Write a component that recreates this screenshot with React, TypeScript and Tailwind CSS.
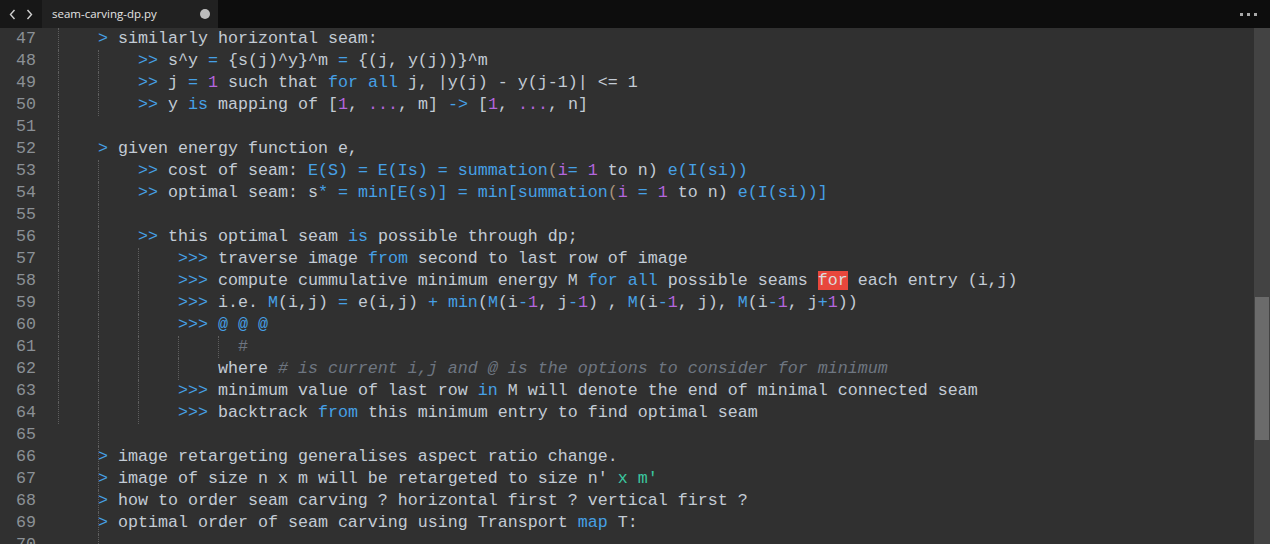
import React from "react";

type Row = { n: number; guides: number[]; src: string };

// ⟦k|text⟧ marks a coloured run; k = b blue, p purple, g green, c comment, i italic comment, t paren, h highlight
const rows: Row[] = [
  { n: 47, guides: [0], src: "    ⟦b|>⟧ similarly horizontal seam:" },
  { n: 48, guides: [0, 4], src: "        ⟦b|>>⟧ s^y ⟦b|=⟧ {s(j)^y}^m ⟦b|=⟧ {(j, y(j))}^m" },
  { n: 49, guides: [0, 4], src: "        ⟦b|>>⟧ j ⟦b|=⟧ ⟦p|1⟧ such that ⟦b|for all⟧ j, |y(j) - y(j-1)| <= 1" },
  { n: 50, guides: [0, 4], src: "        ⟦b|>>⟧ y ⟦b|is⟧ mapping of [⟦p|1⟧, ⟦p|...⟧, m] ⟦b|->⟧ [⟦p|1⟧, ⟦p|...⟧, n]" },
  { n: 51, guides: [0], src: "" },
  { n: 52, guides: [0], src: "    ⟦b|>⟧ given energy function e," },
  { n: 53, guides: [0, 4], src: "        ⟦b|>>⟧ cost of seam: ⟦b|E(S) = E(Is) = summation⟧⟦t|(⟧⟦p|i⟧⟦b|=⟧ ⟦p|1⟧ to n) ⟦b|e(I(si))⟧" },
  { n: 54, guides: [0, 4], src: "        ⟦b|>>⟧ optimal seam: s⟦b|* = min[E(s)] = min[summation⟧⟦t|(⟧⟦p|i⟧ ⟦b|=⟧ ⟦p|1⟧ to n) ⟦b|e(I(si))]⟧" },
  { n: 55, guides: [0, 4], src: "" },
  { n: 56, guides: [0, 4], src: "        ⟦b|>>⟧ this optimal seam ⟦b|is⟧ possible through dp;" },
  { n: 57, guides: [0, 4, 8], src: "            ⟦b|>>>⟧ traverse image ⟦b|from⟧ second to last row of image" },
  { n: 58, guides: [0, 4, 8], src: "            ⟦b|>>>⟧ compute cummulative minimum energy M ⟦b|for all⟧ possible seams ⟦h|for⟧ each entry (i,j)" },
  { n: 59, guides: [0, 4, 8], src: "            ⟦b|>>>⟧ i.e. ⟦b|M⟧(i,j) ⟦b|=⟧ e(i,j) ⟦b|+ min⟧(⟦b|M⟧(i⟦b|-⟧⟦p|1⟧, j⟦b|-⟧⟦p|1⟧) , ⟦b|M⟧(i⟦b|-⟧⟦p|1⟧, j), ⟦b|M⟧(i⟦b|-⟧⟦p|1⟧, j⟦b|+⟧⟦p|1⟧))" },
  { n: 60, guides: [0, 4, 8], src: "            ⟦b|>>> @ @ @⟧" },
  { n: 61, guides: [0, 4, 8, 12, 16], src: "                  ⟦c|#⟧" },
  { n: 62, guides: [0, 4, 8, 12], src: "                where ⟦i|# is current i,j and @ is the options to consider for minimum⟧" },
  { n: 63, guides: [0, 4, 8], src: "            ⟦b|>>>⟧ minimum value of last row ⟦b|in⟧ M will denote the end of minimal connected seam" },
  { n: 64, guides: [0, 4, 8], src: "            ⟦b|>>>⟧ backtrack ⟦b|from⟧ this minimum entry to find optimal seam" },
  { n: 65, guides: [4], src: "" },
  { n: 66, guides: [4], src: "    ⟦b|>⟧ image retargeting generalises aspect ratio change." },
  { n: 67, guides: [4], src: "    ⟦b|>⟧ image of size n x m will be retargeted to size n' ⟦g|x m'⟧" },
  { n: 68, guides: [4], src: "    ⟦b|>⟧ how to order seam carving ? horizontal first ? vertical first ?" },
  { n: 69, guides: [4], src: "    ⟦b|>⟧ optimal order of seam carving using Transport ⟦b|map⟧ T:" },
  { n: 70, guides: [4], src: "" },
];

const tone: Record<string, string> = {
  b: "text-[#46a0e6]",
  p: "text-[#b366de]",
  g: "text-[#3bc8a0]",
  c: "text-[#6e7681]",
  i: "text-[#6e7681] italic",
  t: "text-[#a8937c]",
  h: "bg-[#e8473c] text-[#dcdcdc]",
};

function Code({ src }: { src: string }) {
  const parts: React.ReactNode[] = [];
  const re = /⟦(\w)\|(.*?)⟧/g;
  let last = 0;
  let m: RegExpExecArray | null;
  let k = 0;
  while ((m = re.exec(src))) {
    if (m.index > last) parts.push(<span key={k++}>{src.slice(last, m.index)}</span>);
    parts.push(
      <span key={k++} className={tone[m[1]]}>
        {m[2]}
      </span>
    );
    last = m.index + m[0].length;
  }
  if (last < src.length) parts.push(<span key={k++}>{src.slice(last)}</span>);
  return <>{parts}</>;
}

export default function App() {
  return (
    <div className="flex h-[544px] w-[1270px] flex-col overflow-hidden bg-[#303030] font-['Liberation_Mono',monospace]">
      {/* tab bar */}
      <div className="flex h-[28px] shrink-0 items-stretch bg-[#0d0d0d]">
        <div className="flex w-[42px] items-center justify-center gap-[10px] bg-[#171717]">
          <svg width="7" height="11" viewBox="0 0 7 11" fill="none" stroke="#d0d0d0" strokeWidth="1.4">
            <path d="M5.5 1 1.5 5.5 5.5 10" />
          </svg>
          <svg width="7" height="11" viewBox="0 0 7 11" fill="none" stroke="#d0d0d0" strokeWidth="1.4">
            <path d="M1.5 1 5.5 5.5 1.5 10" />
          </svg>
        </div>
        <div className="flex w-[176px] items-center justify-between bg-[#212121] pl-[10px] pr-[8px] font-['Open_Sans',sans-serif] text-[11.5px] text-[#e4e4e4]">
          <span>seam-carving-dp.py</span>
          <span className="h-[10px] w-[10px] rounded-full bg-[#bdbdbd]" />
        </div>
        <div className="flex flex-1 items-center justify-end gap-[4px] pr-[13px]">
          <span className="h-[3px] w-[3px] bg-[#a8a8a8]" />
          <span className="h-[3px] w-[3px] bg-[#a8a8a8]" />
          <span className="h-[3px] w-[3px] bg-[#a8a8a8]" />
        </div>
      </div>

      {/* editor */}
      <div className="flex min-h-0 flex-1">
        <div className="flex-1 overflow-hidden pt-[-1px]">
          {rows.map((r) => (
            <div key={r.n} className="flex h-[22px] items-center text-[16.67px] leading-[22px]">
              <span className="w-[58px] shrink-0 pr-[22px] text-right text-[#8b9096]">{r.n}</span>
              <div className="relative h-full flex-1 whitespace-pre text-[#c3cbd5]">
                {r.guides.map((g) => (
                  <span
                    key={g}
                    className="absolute top-0 h-full border-l border-dotted border-[#5e5e5e]"
                    style={{ left: g * 10 }}
                  />
                ))}
                <Code src={r.src} />
              </div>
            </div>
          ))}
        </div>
        <div className="flex w-[16px] shrink-0 flex-col bg-[#434343]">
          <div className="h-[269px]" />
          <div className="ml-[1px] h-[143px] w-[14px] bg-[#6b6b6b]" />
        </div>
      </div>
    </div>
  );
}
